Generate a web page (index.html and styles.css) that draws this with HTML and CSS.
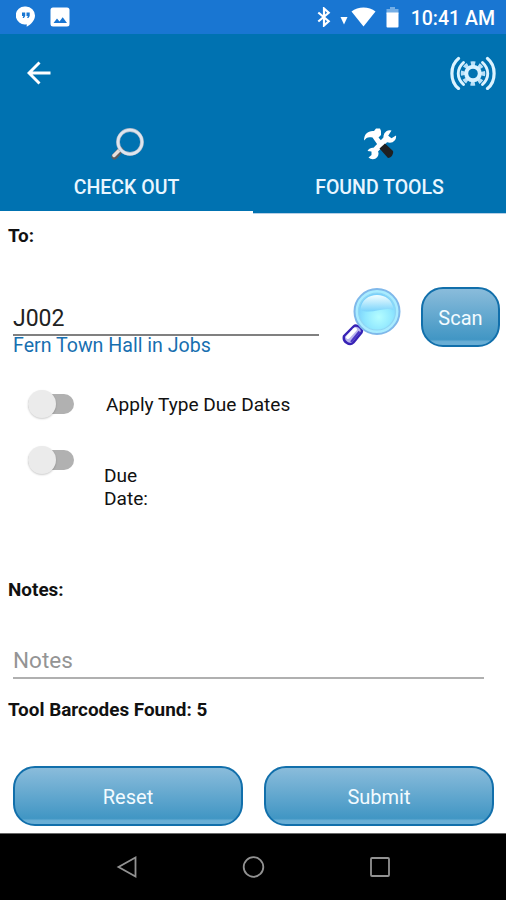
FILE: index.html
```html
<!DOCTYPE html>
<html lang="en">
<head>
    <meta charset="UTF-8">
    <meta name="viewport" content="width=device-width, initial-scale=1.0">
    <title>Check Out</title>
    <link rel="stylesheet" href="styles.css">
</head>
<body>
    <div class="screen">
        <div class="status-bar">
            <svg class="status-chat" width="20" height="22" viewBox="0 0 20 22">
                <path d="M10 .5a9 9 0 0 1 9 9c0 4.800-4 8.800-8.300 11.300v-2.600A9 9 0 1 1 10 .5z" fill="#fff"/>
                <path d="M6 6.500h3.200v3.500l-1.300 2H6.600l.8-2H6zM10.500 6.500h3.200v3.500l-1.300 2h-1.300l.8-2h-1.400z" fill="#1976d2"/>
            </svg>
            <svg class="status-photo" width="20" height="20" viewBox="0 0 20 20">
                <rect x=".5" y=".5" width="19" height="19" rx="2.500" fill="#fff"/>
                <path d="M3.500 16l3.500-4.500 2.500 3 3.200-4.200 4.300 5.700z" fill="#1976d2"/>
            </svg>
            <div class="status-right">
                <svg class="status-bluetooth" width="14" height="20" viewBox="0 0 14 20">
                    <path d="M1.300 5.500l10.400 8.700L7 18.500v-17l4.700 4.300L1.300 14.500" fill="none" stroke="#fff" stroke-width="2.200"/>
                </svg>
                <svg class="status-signal" width="8" height="8" viewBox="0 0 8 8">
                    <path d="M.5 0h7L4 7.500z" fill="#fff"/>
                </svg>
                <svg class="status-wifi" width="25" height="20" viewBox="0 0 25 20">
                    <path d="M.5 4.500C7-1 18-1 24.500 4.500L12.500 19.500z" fill="#fff"/>
                </svg>
                <svg class="status-battery" width="13" height="21" viewBox="0 0 13 21">
                    <path d="M4 0h5v2h3.500v5H.5V2H4z" fill="#75aee5"/>
                    <path d="M.5 5.500h12v14a1 1 0 0 1-1 1h-10a1 1 0 0 1-1-1z" fill="#fff"/>
                </svg>
                <span class="clock">10:41 AM</span>
            </div>
        </div>

        <div class="header">
            <div class="toolbar">
                <svg class="back" width="24" height="24" viewBox="0 0 24 24">
                    <path d="M23.500 12H2.500M12.500 1.500L2 12l10.500 10.500" fill="none" stroke="#fff" stroke-width="2.900"/>
                </svg>
                <svg class="reader" width="46" height="34" viewBox="0 0 46 34">
                    <g fill="none" stroke="#dcf3ff" stroke-linecap="round">
                        <path d="M8.500 2.500C-.3 9.500-.3 25.500 8.500 32.500M37.500 2.500c8.800 7 8.800 23 0 30" stroke-width="3.200"/>
                        <path d="M13.500 6.500c-7 6.500-7 15.500 0 22M32.500 6.500c7 6.500 7 15.500 0 22" stroke-width="2.900"/>
                    </g>
                    <circle cx="23" cy="17.500" r="9.500" fill="none" stroke="#b9e0f8" stroke-width="5.500" stroke-dasharray="4 3.461" transform="rotate(-102 23 17.500)"/>
                    <circle cx="23" cy="17.500" r="6.800" fill="none" stroke="#d8f1ff" stroke-width="4"/>
                </svg>
            </div>
            <div class="tabs">
                <div class="tab active">
                    <svg width="34" height="34" viewBox="0 0 34 34">
                        <path d="M4.500 29.500l6-6.500" stroke="#5f5b5c" stroke-width="6" stroke-linecap="round"/>
                        <path d="M4 28.500l6-6" stroke="#e6dedb" stroke-width="3.500" stroke-linecap="round"/>
                        <circle cx="20" cy="15" r="12" fill="none" stroke="#a4b4c6" stroke-width="3.800"/>
                        <circle cx="20" cy="15" r="12" fill="none" stroke="#dfe5ee" stroke-width="2.600"/>
                    </svg>
                    <span>CHECK OUT</span>
                </div>
                <div class="tab">
                    <svg width="34" height="34" viewBox="0 0 34 34">
                        <path d="M10 25.500L25.500 9.500" stroke="#fff" stroke-width="6"/>
                        <path d="M28.500 3.500a6.300 6.300 0 1 0 4.500 5l-4.500 2.800-3.300-2.500z" fill="#fff"/>
                        <path d="M4.500 24l4 .5v3.500l-3 2.500a5.800 5.800 0 1 0-1-6.500z" fill="#fff"/>
                        <path d="M1 13.500C1 7 5 3.500 11 4l2-2.500h4L18 4v4l-2.500 2.500L22 18l-4.500 4L9.500 10.500C5 9.500 3.500 10.500 1 13.500z" fill="#fff"/>
                        <path d="M16.500 21.500l5.500-5 8 7.500c.8 2.500-1.500 7-5 7z" fill="#1f2022"/>
                    </svg>
                    <span>FOUND TOOLS</span>
                </div>
            </div>
        </div>

        <div class="content">
            <h2 class="label">To:</h2>

            <div class="to-row">
                <div class="field">
                    <input type="text" class="text-input" value="J002">
                    <span class="hint">Fern Town Hall in Jobs</span>
                </div>
                <svg class="lookup" width="60" height="60" viewBox="0 0 60 60">
                    <defs>
                        <radialGradient id="lens" cx=".55" cy=".65" r=".6">
                            <stop offset="0" stop-color="#b4fdff"/>
                            <stop offset=".6" stop-color="#91e8ff"/>
                            <stop offset="1" stop-color="#7ad0fb"/>
                        </radialGradient>
                        <linearGradient id="shine" x1="0" y1="0" x2="0" y2="1">
                            <stop offset="0" stop-color="#f2feff"/>
                            <stop offset="1" stop-color="#79d3fb"/>
                        </linearGradient>
                    </defs>
                    <path d="M16 42l4-5" stroke="#7898d6" stroke-width="5"/>
                    <path d="M11.500 39.500c3-3 10 2 8 6l-8 10c-4 4-11-1-9.500-6.500z" fill="#b9b5ee" stroke="#3722b5" stroke-width="2.400"/>
                    <path d="M6 50l7-7.500" stroke="#fff" stroke-width="4" stroke-linecap="round"/>
                    <path d="M9 55l8.500-10.500" stroke="#4b37c4" stroke-width="2.200"/>
                    <circle cx="35" cy="24.500" r="22.500" fill="#a9ecff" stroke="#7fb8ea" stroke-width="2"/>
                    <circle cx="35" cy="24.500" r="18.500" fill="url(#lens)" stroke="#8fd6f4" stroke-width="1.200"/>
                    <path d="M18.500 23c1-20 32-20 33 0-9-4-22 5-33 0z" fill="url(#shine)"/>
                </svg>
                <button class="btn btn-scan">Scan</button>
            </div>

            <div class="switch-row">
                <span class="switch"></span>
                <span class="switch-label">Apply Type Due Dates</span>
            </div>
            <div class="switch-row due-row">
                <span class="switch"></span>
                <span class="switch-label">Due<br>Date:</span>
            </div>

            <h2 class="label">Notes:</h2>
            <input type="text" class="text-input notes" placeholder="Notes">
            <h2 class="label found">Tool Barcodes Found: 5</h2>

            <div class="actions">
                <button class="btn">Reset</button>
                <button class="btn">Submit</button>
            </div>
        </div>

        <div class="nav-bar">
            <svg width="24" height="24" viewBox="0 0 24 24"><path d="M20.500 2.500v19L3.500 12z"/></svg>
            <svg width="24" height="24" viewBox="0 0 24 24"><circle cx="11.500" cy="12" r="9.800"/></svg>
            <svg width="24" height="24" viewBox="0 0 24 24"><rect x="3" y="3" width="18" height="18" rx="1"/></svg>
        </div>
    </div>
</body>
</html>
```

FILE: styles.css
```css
:root {
    --primary-color: #0072b1;
    --status-color: #1976d2;
    --text-color: #111;
}

* {
    margin: 0;
    padding: 0;
    box-sizing: border-box;
}

body {
    font-family: Roboto, "Liberation Sans", sans-serif;
    background-color: #fff;
    color: var(--text-color);
}

svg {
    display: block;
    flex-shrink: 0;
}

.screen {
    width: 506px;
    height: 900px;
    display: flex;
    flex-direction: column;
    overflow: hidden;
}

.status-bar {
    height: 34px;
    background-color: var(--status-color);
    display: flex;
    align-items: center;
    padding: 0 11px 0 16px;
}

.status-photo {
    margin-left: 14px;
}

.status-right {
    display: flex;
    align-items: center;
    margin-left: auto;
}

.status-signal {
    margin: 8px 3px 0 9px;
}

.status-battery {
    margin: 0 12px 0 10px;
}

.clock {
    font-size: 19.5px;
    font-weight: 500;
    line-height: 34px;
    color: #fff;
    padding-top: 3px;
}

.header {
    height: 180px;
    background-color: var(--primary-color);
    display: flex;
    flex-direction: column;
}

.toolbar {
    height: 78px;
    display: flex;
    align-items: center;
    justify-content: space-between;
    padding: 0 10px 0 27px;
}

.tabs {
    flex: 1;
    display: flex;
}

.tab {
    flex: 1;
    display: flex;
    flex-direction: column;
    align-items: center;
    padding-top: 15px;
    border-bottom: 1px solid #b5cfe6;
    color: #e9f6ff;
    font-size: 19.5px;
    font-weight: 500;
}

.tab span {
    line-height: 24px;
    margin-top: 15px;
}

.tab.active {
    border-bottom: 3px solid #fff;
}

.content {
    flex: 1;
    display: flex;
    flex-direction: column;
    padding-top: 11px;
}

.label {
    font-size: 18.9px;
    font-weight: 700;
    line-height: 22px;
    padding-left: 8px;
}

.to-row {
    display: flex;
    align-items: flex-start;
    margin-top: 40px;
    padding: 0 6px 0 13px;
    height: 72px;
}

.field {
    width: 306px;
    padding-top: 13px;
}

.text-input {
    width: 100%;
    height: 36px;
    display: block;
    border: none;
    border-bottom: 2px solid #808080;
    outline: none;
    background: none;
    padding-top: 2px;
    font-family: inherit;
    font-size: 23px;
    color: #222;
}

.text-input::placeholder {
    color: #949494;
}

.hint {
    display: block;
    font-size: 19.6px;
    line-height: 20px;
    color: #176fb0;
}

.lookup {
    margin-left: 23px;
}

.btn {
    flex: 1;
    height: 60px;
    padding-top: 2px;
    border: 2px solid #116fab;
    border-radius: 22px;
    background: linear-gradient(#8abcdb, #4196c4 90%, #69aed5 94%);
    color: #f3fbff;
    font-family: inherit;
    font-size: 20px;
}

.btn-scan {
    flex: none;
    width: 79px;
    margin-left: auto;
}

.switch-row {
    display: flex;
    align-items: center;
    height: 56px;
    margin-top: 17px;
    padding-left: 28px;
}

.switch {
    width: 46px;
    height: 20px;
    background-color: #b1b1b1;
    border-radius: 10px;
    display: flex;
    align-items: center;
}

.switch::before {
    content: "";
    width: 28px;
    height: 28px;
    flex-shrink: 0;
    border-radius: 50%;
    background-color: #ebebeb;
    box-shadow: 0 1px 2px rgba(0,0,0,0.2);
}

.switch-label {
    margin-left: 32px;
    padding-top: 2px;
    font-size: 19.1px;
    line-height: 22.5px;
}

.due-row {
    align-items: flex-start;
    height: 147px;
    margin-top: 0;
    padding-top: 18px;
}

.due-row .switch-label {
    margin: 13px 0 0 30px;
}

.notes {
    width: 471px;
    height: 38px;
    margin: 40px 0 0 13px;
    border-bottom-color: #b0b0b0;
    font-size: 22.5px;
}

.found {
    margin-top: 20px;
}

.actions {
    display: flex;
    gap: 21px;
    padding: 0 12px 0 13px;
    margin-top: 45px;
}

.nav-bar {
    height: 67px;
    background-color: #000;
    border-top: 1px solid #666;
    display: flex;
    align-items: center;
    justify-content: space-between;
    padding: 0 114px 0 115px;
}

.nav-bar svg {
    fill: none;
    stroke: #929292;
    stroke-width: 1.8;
}
```
